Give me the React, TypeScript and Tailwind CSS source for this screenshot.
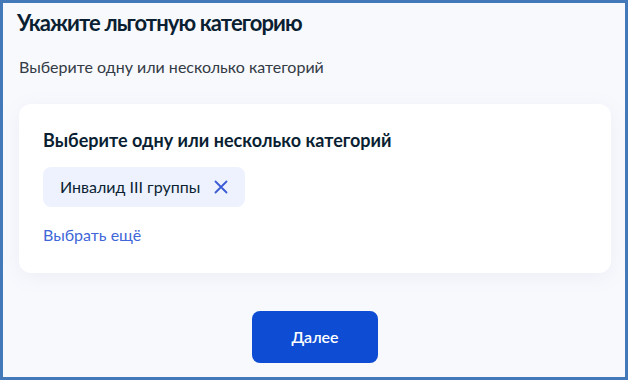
import React from 'react';

export default function App() {
  return (
    <div className="w-[628px] h-[380px] border-[3px] border-[#4479b9] bg-[#f8f9fd] font-['Lato','Noto_Sans',sans-serif] flex flex-col overflow-hidden">
      <h1 className="pl-[14px] pt-[6px] text-[22px] leading-[28px] font-bold text-[#0b1f33] tracking-[-0.9px]">
        Укажите льготную категорию
      </h1>
      <p className="pl-[16px] mt-[20px] text-[16px] leading-[20px] text-[#333b45]">
        Выберите одну или несколько категорий
      </p>

      <div className="ml-[16px] mr-[14px] mt-[27px] bg-white rounded-[12px] shadow-[0_4px_20px_rgba(100,120,160,0.08)] px-[24px] pt-[24px] pb-[26px]">
        <h2 className="text-[18px] leading-[24px] font-bold text-[#0b1f33]">
          Выберите одну или несколько категорий
        </h2>
        <div className="mt-[15px] inline-flex items-center gap-[14px] h-[40px] pl-[17px] pr-[17px] rounded-[8px] bg-[#edf2fe]">
          <span className="text-[16px] text-[#0b1f33]">Инвалид III группы</span>
          <svg width="14" height="14" viewBox="0 0 14 14" fill="none">
            <path d="M1.5 1.5L12.5 12.5M12.5 1.5L1.5 12.5" stroke="#3a5bd3" strokeWidth="1.8" strokeLinecap="round" />
          </svg>
        </div>
        <div className="mt-[16px]">
          <span className="text-[16px] leading-[20px] text-[#3f67d9]">Выбрать ещё</span>
        </div>
      </div>

      <div className="flex justify-center mt-[38px] pl-[2px]">
        <button className="w-[126px] h-[52px] rounded-[8px] bg-[#0d4cd3] text-white text-[16px] font-semibold">
          Далее
        </button>
      </div>
    </div>
  );
}
